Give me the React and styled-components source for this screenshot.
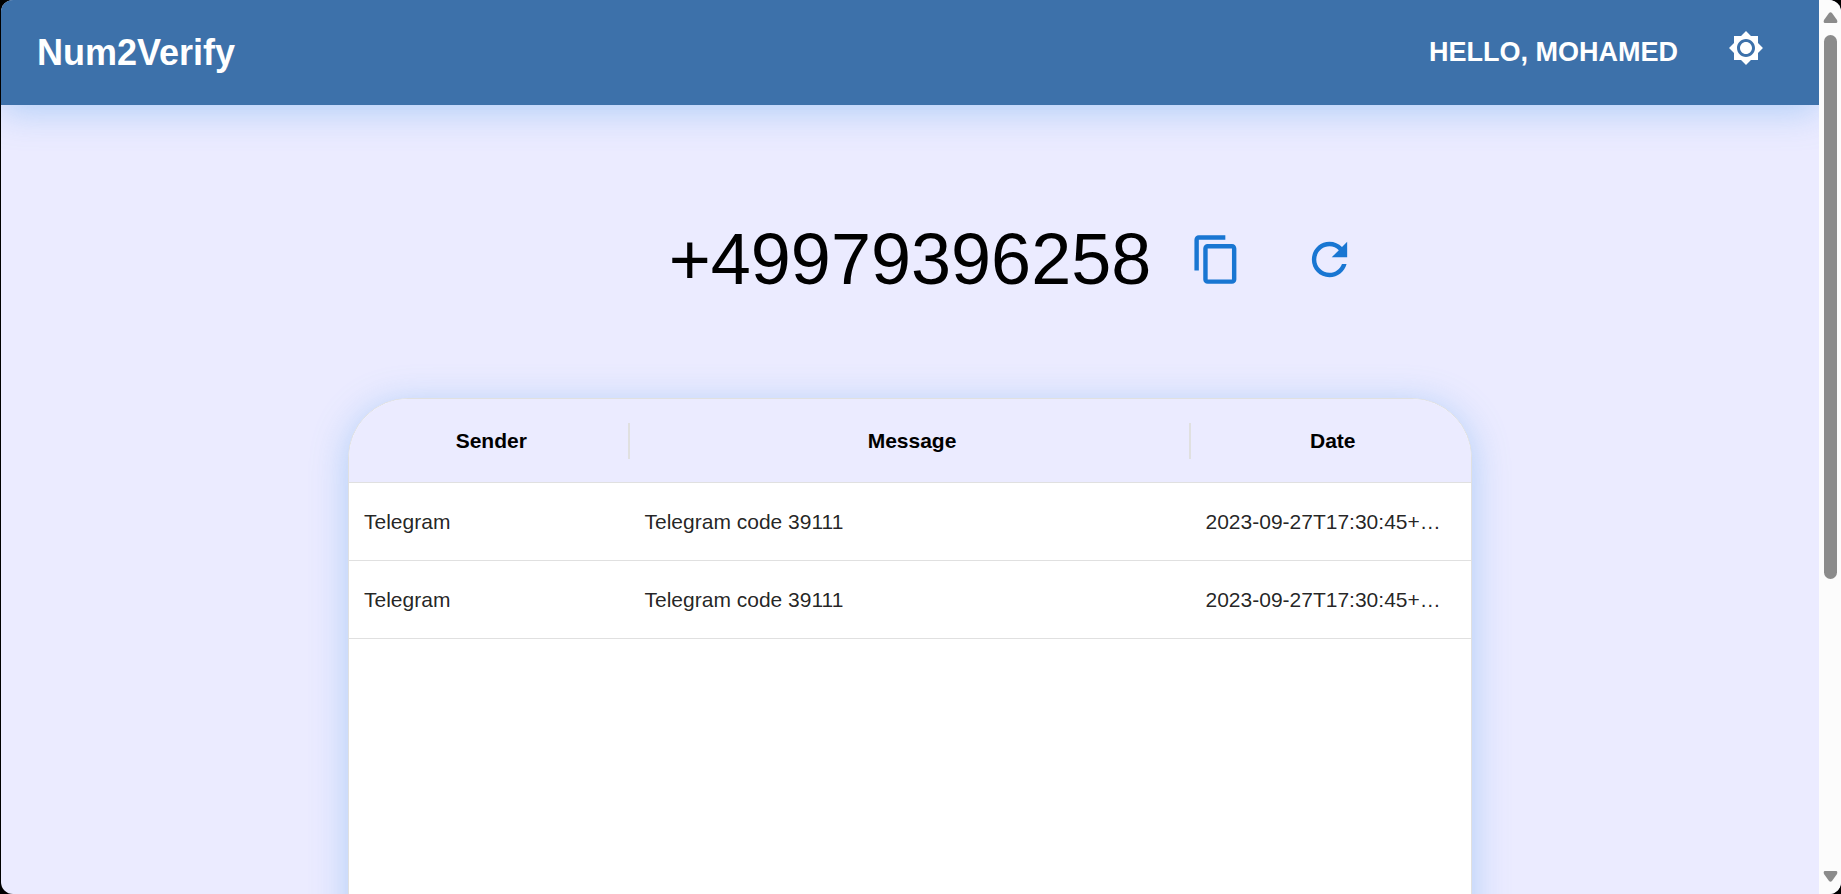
import React from "react";
import styled, { createGlobalStyle } from "styled-components";

const GlobalStyle = createGlobalStyle`
  * { box-sizing: border-box; }
  body {
    margin: 0;
    background: #000;
    font-family: "Liberation Sans", Arial, sans-serif;
  }
`;

const Window = styled.div`
  display: flex;
  height: 100vh;
  margin-left: 1px;
  border-radius: 12px;
  overflow: hidden;
  background: #ebebff;
`;

const Page = styled.div`
  flex: 1;
  min-width: 0;
  overflow-x: hidden;
  overflow-y: auto;
  scrollbar-width: none;
`;

const NavBar = styled.header`
  display: flex;
  align-items: center;
  justify-content: space-between;
  height: 105px;
  padding: 0 36px;
  background: #3d71aa;
  color: #fff;
  box-shadow: 0 6px 36px rgba(90, 165, 235, 0.42);
`;

const Brand = styled.h1`
  margin: 0;
  font-size: 36px;
  line-height: 54px;
`;

const Account = styled.div`
  display: flex;
  align-items: center;
  gap: 38px;
  padding-bottom: 2px;
`;

const Greeting = styled.span`
  font-size: 27px;
  font-weight: 700;
  line-height: 40px;
  text-transform: uppercase;
`;

const IconButton = styled.button`
  display: flex;
  padding: 12px;
  border: 0;
  background: none;
  color: ${({ $color }) => $color};
  cursor: pointer;
`;

const ThemeSlot = styled.div`
  padding: 0 7px 7px 0;
`;

const Icon = styled.svg`
  display: block;
  width: ${({ $size }) => $size}px;
  height: ${({ $size }) => $size}px;
  fill: currentColor;
`;

const Main = styled.main`
  display: flex;
  flex-direction: column;
  align-items: center;
  padding: 100px 0;
  gap: 85px;
`;

const NumberRow = styled.section`
  display: grid;
  grid-template-columns: 1fr auto 1fr;
  align-items: center;
  width: 100%;
`;

const PhoneNumber = styled.h2`
  grid-column: 2;
  margin: 0;
  font-size: 72px;
  font-weight: 400;
  line-height: 108px;
`;

const Actions = styled.div`
  display: flex;
  gap: 36px;
  padding-left: 27px;
`;

const Card = styled.section`
  width: 62%;
  max-width: 1124px;
  min-height: 948px;
  border: 1px solid #e0e0e0;
  border-radius: 60px;
  overflow: hidden;
  background: #fff;
  box-shadow: 0 6px 36px rgba(90, 165, 235, 0.42);
`;

const Table = styled.table`
  width: 100%;
  table-layout: fixed;
  border-collapse: separate;
  border-spacing: 0;
  font-size: 21px;
  line-height: 32px;
`;

const HeadCell = styled.th`
  width: ${({ $width }) => $width};
  height: 84px;
  padding: 0 15px 0 19px;
  border-bottom: 1px solid #e0e0e0;
  background: #ebebff
    ${({ $divided }) =>
      $divided && "linear-gradient(#e0e0e0, #e0e0e0) right center / 2px 36px no-repeat"};
`;

const Cell = styled.td`
  height: 78px;
  padding: 0 24px 0 15px;
  border-bottom: 1px solid #e0e0e0;
  color: rgba(0, 0, 0, 0.87);
  white-space: nowrap;
  overflow: hidden;
  text-overflow: ellipsis;
`;

const ScrollBar = styled.div`
  display: flex;
  flex-direction: column;
  align-items: center;
  width: 22px;
  padding: 12px 0;
  background: #fcfcfc;
  color: #8b8b8b;
`;

const ScrollArrow = styled.button`
  display: flex;
  padding: 0;
  border: 0;
  background: none;
  color: inherit;
`;

const ScrollTrack = styled.div`
  flex: 1;
  width: 13px;
  margin: 12px 0;
`;

const ScrollThumb = styled.div`
  height: 66%;
  border-radius: 7px;
  background: currentColor;
`;

const ICONS = {
  sun: "M20 8.69V4h-4.69L12 .69 8.69 4H4v4.69L.69 12 4 15.31V20h4.69L12 23.31 15.31 20H20v-4.69L23.31 12 20 8.69zM12 18c-3.31 0-6-2.69-6-6s2.69-6 6-6 6 2.69 6 6-2.69 6-6 6zm0-10c-2.21 0-4 1.79-4 4s1.79 4 4 4 4-1.79 4-4-1.79-4-4-4z",
  copy: "M16 1H4c-1.1 0-2 .9-2 2v14h2V3h12V1zm3 4H8c-1.1 0-2 .9-2 2v14c0 1.1.9 2 2 2h11c1.1 0 2-.9 2-2V7c0-1.1-.9-2-2-2zm0 16H8V7h11v14z",
  refresh:
    "M17.65 6.35C16.2 4.9 14.21 4 12 4c-4.42 0-7.99 3.58-7.99 8s3.57 8 7.99 8c3.73 0 6.84-2.55 7.73-6h-2.08c-.82 2.33-3.04 4-5.65 4-3.31 0-6-2.69-6-6s2.69-6 6-6c1.66 0 3.14.69 4.22 1.78L13 11h7V4l-2.35 2.35z",
};

const COLUMNS = [
  { key: "sender", label: "Sender", width: "25%" },
  { key: "message", label: "Message", width: "50%" },
  { key: "date", label: "Date", width: "25%" },
];

const MESSAGES = [
  { id: 1, sender: "Telegram", message: "Telegram code 39111", date: "2023-09-27T17:30:45+00:00" },
  { id: 2, sender: "Telegram", message: "Telegram code 39111", date: "2023-09-27T17:30:45+00:00" },
];

function ActionButton({ icon, label, size, color }) {
  return (
    <IconButton type="button" aria-label={label} $color={color}>
      <Icon viewBox="0 0 24 24" $size={size} aria-hidden="true">
        <path d={ICONS[icon]} />
      </Icon>
    </IconButton>
  );
}

function Arrow({ label, path }) {
  return (
    <ScrollArrow type="button" aria-label={label}>
      <svg width="15" height="11" viewBox="0 0 15 11" aria-hidden="true">
        <path d={path} fill="currentColor" />
      </svg>
    </ScrollArrow>
  );
}

export default function App() {
  return (
    <>
      <GlobalStyle />
      <Window>
        <Page>
          <NavBar>
            <Brand>Num2Verify</Brand>
            <Account>
              <Greeting>Hello, Mohamed</Greeting>
              <ThemeSlot>
                <ActionButton icon="sun" label="Toggle theme" size={36} color="#fff" />
              </ThemeSlot>
            </Account>
          </NavBar>
          <Main>
            <NumberRow>
              <PhoneNumber>+49979396258</PhoneNumber>
              <Actions>
                <ActionButton icon="copy" label="Copy number" size={53} color="#1976d2" />
                <ActionButton icon="refresh" label="New number" size={53} color="#1976d2" />
              </Actions>
            </NumberRow>
            <Card>
              <Table>
                <thead>
                  <tr>
                    {COLUMNS.map((column, index) => (
                      <HeadCell
                        key={column.key}
                        scope="col"
                        $width={column.width}
                        $divided={index < COLUMNS.length - 1}
                      >
                        {column.label}
                      </HeadCell>
                    ))}
                  </tr>
                </thead>
                <tbody>
                  {MESSAGES.map((row) => (
                    <tr key={row.id}>
                      {COLUMNS.map((column) => (
                        <Cell key={column.key}>{row[column.key]}</Cell>
                      ))}
                    </tr>
                  ))}
                </tbody>
              </Table>
            </Card>
          </Main>
        </Page>
        <ScrollBar>
          <Arrow label="Scroll up" path="M6 1Q7.500 -0.500 9 1L14 8Q15 11 13 11H2Q0 11 1 8Z" />
          <ScrollTrack>
            <ScrollThumb />
          </ScrollTrack>
          <Arrow label="Scroll down" path="M6 10Q7.500 11.500 9 10L14 3Q15 0 13 0H2Q0 0 1 3Z" />
        </ScrollBar>
      </Window>
    </>
  );
}
